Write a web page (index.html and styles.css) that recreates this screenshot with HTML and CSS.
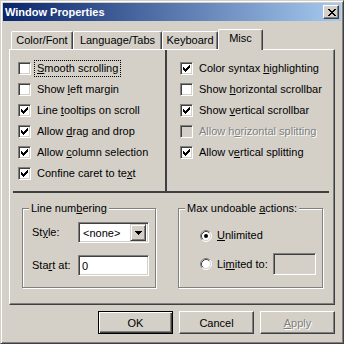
FILE: index.html
```html
<!DOCTYPE html>
<html>
<head>
    <title>Window Properties</title>
    <link rel="stylesheet" href="styles.css">
</head>
<body>
<div class="window">
    <div class="titlebar">
        <span class="title">Window Properties</span>
        <span class="close-btn">
            <svg width="8" height="7" viewBox="0 0 8 7" shape-rendering="crispEdges"><path d="M0 0h2v1H0z M6 0h2v1H6z M1 1h2v1H1z M5 1h2v1H5z M2 2h4v1H2z M3 3h2v1H3z M2 4h4v1H2z M1 5h2v1H1z M5 5h2v1H5z M0 6h2v1H0z M6 6h2v1H6z" fill="#000"/></svg>
        </span>
    </div>
    <div class="content">
        <div class="tabs">
            <div class="tab tab-color">Color/Font</div>
            <div class="tab tab-lang">Language/Tabs</div>
            <div class="tab tab-keys">Keyboard</div>
            <div class="tab tab-misc active">Misc</div>
        </div>
        <div class="panel">
            <div class="top">
                <div class="col col-left">
                    <div class="row"><span class="cb"></span><span class="lbl focus"><u>S</u>mooth scrolling</span></div>
                    <div class="row"><span class="cb"></span><span class="lbl">Show <u>l</u>eft margin</span></div>
                    <div class="row"><span class="cb checked"></span><span class="lbl">Line <u>t</u>ooltips on scroll</span></div>
                    <div class="row"><span class="cb checked"></span><span class="lbl">Allow <u>d</u>rag and drop</span></div>
                    <div class="row"><span class="cb checked"></span><span class="lbl">Allow <u>c</u>olumn selection</span></div>
                    <div class="row"><span class="cb checked"></span><span class="lbl">Confine caret to te<u>x</u>t</span></div>
                </div>
                <div class="col col-right">
                    <div class="row"><span class="cb checked"></span><span class="lbl">Color syntax <u>h</u>ighlighting</span></div>
                    <div class="row"><span class="cb"></span><span class="lbl">Show <u>h</u>orizontal scrollbar</span></div>
                    <div class="row"><span class="cb checked"></span><span class="lbl">Show <u>v</u>ertical scrollbar</span></div>
                    <div class="row"><span class="cb disabled"></span><span class="lbl disabled-text">Allow h<u>o</u>rizontal splitting</span></div>
                    <div class="row"><span class="cb checked"></span><span class="lbl">Allow v<u>e</u>rtical splitting</span></div>
                </div>
            </div>
            <div class="hline"></div>
            <div class="bottom">
                <div class="group group-lines">
                    <span class="legend">Line num<u>b</u>ering</span>
                    <div class="field-row first">
                        <span class="field-lbl">St<u>y</u>le:</span>
                        <span class="field combo">
                            <span class="combo-text">&lt;none&gt;</span>
                            <span class="combo-btn">
                                <svg width="7" height="4" viewBox="0 0 7 4" shape-rendering="crispEdges"><path d="M0 0h7v1H0z M1 1h5v1H1z M2 2h3v1H2z M3 3h1v1H3z" fill="#000"/></svg>
                            </span>
                        </span>
                    </div>
                    <div class="field-row">
                        <span class="field-lbl">Sta<u>r</u>t at:</span>
                        <span class="field edit">0</span>
                    </div>
                </div>
                <div class="group group-undo">
                    <span class="legend">Max undoable <u>a</u>ctions:</span>
                    <div class="radio-row first">
                        <svg class="radio" width="12" height="12" viewBox="0 0 12 12">
                            <circle cx="6" cy="6" r="5" fill="#fff"/>
                            <path d="M2.11 9.89A5.5 5.5 0 0 1 9.89 2.11" stroke="#808080" fill="none"/>
                            <path d="M9.89 2.11A5.5 5.5 0 0 1 2.11 9.89" stroke="#fff" fill="none"/>
                            <path d="M2.82 9.18A4.5 4.5 0 0 1 9.18 2.82" stroke="#404040" fill="none"/>
                            <path d="M9.18 2.82A4.5 4.5 0 0 1 2.82 9.18" stroke="#d4d0c8" fill="none"/>
                            <circle cx="6" cy="6" r="2" fill="#000"/>
                        </svg>
                        <span class="lbl"><u>U</u>nlimited</span>
                    </div>
                    <div class="radio-row second">
                        <svg class="radio" width="12" height="12" viewBox="0 0 12 12">
                            <circle cx="6" cy="6" r="5" fill="#fff"/>
                            <path d="M2.11 9.89A5.5 5.5 0 0 1 9.89 2.11" stroke="#808080" fill="none"/>
                            <path d="M9.89 2.11A5.5 5.5 0 0 1 2.11 9.89" stroke="#fff" fill="none"/>
                            <path d="M2.82 9.18A4.5 4.5 0 0 1 9.18 2.82" stroke="#404040" fill="none"/>
                            <path d="M9.18 2.82A4.5 4.5 0 0 1 2.82 9.18" stroke="#d4d0c8" fill="none"/>
                        </svg>
                        <span class="lbl">Li<u>m</u>ited to:</span>
                        <span class="field edit small"></span>
                    </div>
                </div>
            </div>
        </div>
        <div class="buttons">
            <span class="btn default">OK</span>
            <span class="btn">Cancel</span>
            <span class="btn disabled-text"><u>A</u>pply</span>
        </div>
    </div>
</div>
</body>
</html>
```

FILE: styles.css
```css
body {
    margin: 0;
    font-family: "Liberation Sans", Arial, sans-serif;
    font-size: 11px;
    color: #000;
}

.window {
    width: 344px;
    height: 344px;
    box-sizing: border-box;
    background-color: #d4d0c8;
    border: 1px solid;
    border-color: #d4d0c8 #404040 #404040 #d4d0c8;
    box-shadow: inset 1px 1px #fff, inset -1px -1px #808080;
    padding: 2px;
}

.titlebar {
    height: 18px;
    display: flex;
    align-items: center;
    justify-content: space-between;
    padding: 0 2px;
    background: linear-gradient(to right, #0a246a, #a6caf0);
}

.title {
    color: #fff;
    font-weight: bold;
    font-size: 11px;
}

.close-btn {
    width: 16px;
    height: 14px;
    box-sizing: border-box;
    display: flex;
    align-items: center;
    justify-content: center;
    background-color: #d4d0c8;
    border: 1px solid;
    border-color: #fff #404040 #404040 #fff;
    box-shadow: inset -1px -1px #808080;
    padding-left: 1px;
}

.content {
    padding: 0 6px;
}

/* tabs */
.tabs {
    display: flex;
    align-items: flex-end;
    height: 20px;
    margin-top: 8px;
    padding-left: 2px;
}

.tab {
    height: 18px;
    box-sizing: border-box;
    border-top: 1px solid #fff;
    border-left: 1px solid #fff;
    border-right: 1px solid #404040;
    box-shadow: inset -1px 0 #808080;
    border-radius: 2px 2px 0 0;
    text-align: center;
    line-height: 16px;
}

.tab-color { width: 62px; }
.tab-lang { width: 89px; }
.tab-keys { width: 56px; }

.tab.active {
    width: 45px;
    height: 21px;
    margin-bottom: -1px;
    background-color: #d4d0c8;
    position: relative;
    z-index: 1;
    line-height: 16px;
}

/* panel */
.panel {
    height: 256px;
    box-sizing: border-box;
    border-top: 1px solid #fff;
    border-left: 1px solid #fff;
    border-right: 1px solid #404040;
    border-bottom: 1px solid #404040;
    box-shadow: inset -1px -1px #808080;
}

.top {
    display: flex;
    height: 141px;
}

.col {
    box-sizing: border-box;
    padding-top: 8px;
}

.col-left {
    width: 157px;
    padding-left: 8px;
    border-right: 2px solid #404040;
}

.col-right {
    padding-left: 13px;
}

.row {
    display: flex;
    align-items: center;
    height: 21px;
}

.cb {
    width: 13px;
    height: 13px;
    box-sizing: border-box;
    border: 1px solid;
    border-color: #808080 #fff #fff #808080;
    box-shadow: inset 1px 1px #404040, inset -1px -1px #d4d0c8;
    background-color: #fff;
    margin-right: 4px;
    flex: none;
}

.cb.checked {
    background: #fff url("data:image/svg+xml,%3Csvg xmlns='http://www.w3.org/2000/svg' width='7' height='7' shape-rendering='crispEdges'%3E%3Cpath d='M0 2h1v3H0z M1 3h1v3H1z M2 4h1v3H2z M3 3h1v3H3z M4 2h1v3H4z M5 1h1v3H5z M6 0h1v3H6z'/%3E%3C/svg%3E") no-repeat 2px 2px;
}

.cb.disabled {
    background-color: #d4d0c8;
}

.lbl {
    padding: 1px 2px;
    line-height: 13px;
    white-space: nowrap;
}

.lbl.focus {
    outline: 1px dotted #000;
}

.disabled-text {
    color: #808080;
    text-shadow: 1px 1px #fff;
}

.hline {
    height: 2px;
    background-color: #404040;
    margin: 0 5px 0 3px;
}

/* group boxes */
.bottom {
    display: flex;
    gap: 22px;
    padding: 15px 0 0 12px;
}

.group {
    height: 80px;
    box-sizing: border-box;
    border: 1px solid #808080;
    box-shadow: inset 1px 1px #fff, 1px 1px #fff;
}

.group-lines {
    width: 134px;
    padding-left: 9px;
}

.group-undo {
    width: 145px;
    padding: 0 6px 0 21px;
}

.legend {
    display: table;
    margin: -7px 0 0 -3px;
    padding: 0 2px;
    line-height: 13px;
    background-color: #d4d0c8;
}

.group-undo .legend {
    margin-left: -15px;
}

.field-row {
    display: flex;
    align-items: center;
    margin-top: 12px;
}

.field-row.first {
    margin-top: 7px;
}

.field-lbl {
    width: 46px;
    line-height: 13px;
}

.field {
    height: 21px;
    box-sizing: border-box;
    border: 1px solid;
    border-color: #808080 #fff #fff #808080;
    box-shadow: inset 1px 1px #404040, inset -1px -1px #d4d0c8;
    background-color: #fff;
    display: flex;
    align-items: center;
}

.combo {
    width: 71px;
    padding: 2px;
    justify-content: space-between;
}

.combo-text {
    padding-left: 2px;
}

.combo-btn {
    width: 16px;
    height: 17px;
    box-sizing: border-box;
    background-color: #d4d0c8;
    border: 1px solid;
    border-color: #d4d0c8 #404040 #404040 #d4d0c8;
    box-shadow: inset 1px 1px #fff, inset -1px -1px #808080;
    display: flex;
    align-items: center;
    justify-content: center;
}

.edit {
    width: 71px;
    padding-left: 3px;
}

.edit.small {
    width: 43px;
    height: 22px;
    margin-left: auto;
    background-color: #d4d0c8;
}

.radio-row {
    display: flex;
    align-items: center;
    height: 13px;
    margin-top: 14px;
}

.radio-row.second {
    height: 22px;
    margin-top: 11px;
}

.radio {
    flex: none;
    margin-right: 3px;
}

/* buttons */
.buttons {
    display: flex;
    justify-content: flex-end;
    gap: 6px;
    margin-top: 6px;
}

.btn {
    width: 75px;
    height: 23px;
    box-sizing: border-box;
    display: flex;
    align-items: center;
    justify-content: center;
    border: 1px solid;
    border-color: #fff #404040 #404040 #fff;
    box-shadow: inset -1px -1px #808080;
}

.btn.default {
    border-color: #000;
    box-shadow: inset 1px 1px #fff, inset -1px -1px #404040, inset -2px -2px #808080;
}
```
